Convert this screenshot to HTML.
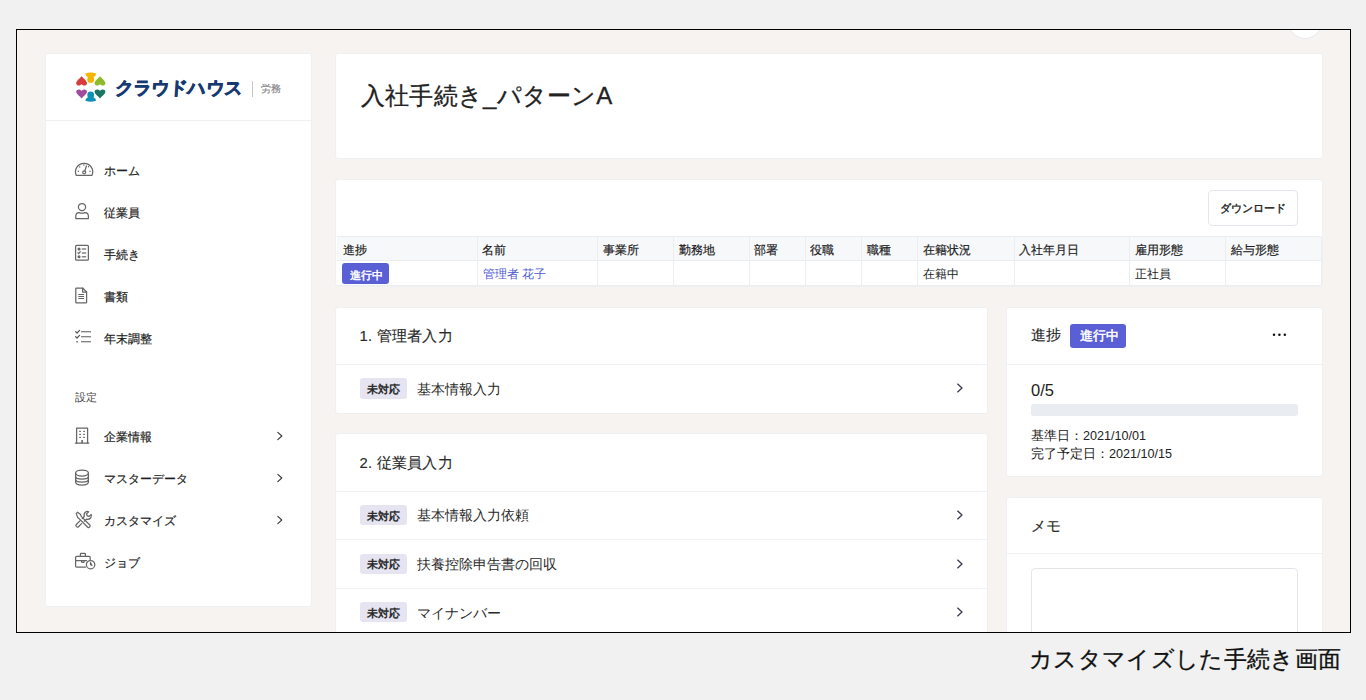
<!DOCTYPE html>
<html lang="ja">
<head>
<meta charset="utf-8">
<style>
*{box-sizing:border-box;margin:0;padding:0}
html,body{width:1366px;height:700px;overflow:hidden;background:#f1f1f1;font-family:"Liberation Sans",sans-serif;color:#222}
.frame{position:absolute;left:16px;top:29px;width:1335px;height:604px;border:1px solid #000;overflow:hidden;background:#f6f3f0}
.inner{position:absolute;left:-17px;top:-30px;width:1366px;height:700px}
.card{position:absolute;background:#fff;border:1px solid #eff0f2;border-radius:3px}
.abs{position:absolute;white-space:nowrap}
.caption{position:absolute;left:1029px;top:644px;font-size:23.3px;letter-spacing:0.33px;color:#111;-webkit-text-stroke:0.3px #111;white-space:nowrap;line-height:30px}
.nav{position:absolute;left:0;width:264px;height:42px}
.nav .t{position:absolute;left:58px;top:0;line-height:42px;font-size:13px;font-weight:bold;color:#222}
.nav svg{position:absolute;left:28px;top:12px}
.nav .chev{position:absolute;left:230px;top:15px}
.th{font-size:12px;line-height:16px;color:#1e1e1e;-webkit-text-stroke:0.2px #1e1e1e}
.sh{font-size:14.8px;line-height:22px;letter-spacing:0.25px;color:#2a2a2a;-webkit-text-stroke:0.15px #2a2a2a}
.mb{font-size:10.8px;line-height:16px;color:#222;-webkit-text-stroke:0.45px #222}
.rt{font-size:13.6px;line-height:20px;letter-spacing:0px;color:#2a2a2a}
.bdg2{font-size:12.6px;line-height:16px;letter-spacing:0.4px;color:#fff;-webkit-text-stroke:0.5px #fff}
.dt{font-size:12.6px;line-height:16px;color:#222}
.td{font-size:12px;line-height:16px;color:#222}
.bt{font-size:10.5px;line-height:16px;color:#222;-webkit-text-stroke:0.4px #222}
.bdg{font-size:11.2px;line-height:14px;letter-spacing:0.2px;color:#fff;-webkit-text-stroke:0.45px #fff}
.nt{font-size:12.4px;line-height:21px;color:#1e1e1e;-webkit-text-stroke:0.2px #1e1e1e}
</style>
</head>
<body>
<div class="frame"><div class="inner">
  <!-- avatar circle top right -->
  <div style="position:absolute;left:1288px;top:5px;width:34px;height:34px;border-radius:50%;background:#fff;border:1px solid #e8eaef"></div>

  <!-- sidebar -->
  <div class="card" style="left:45px;top:53px;width:267px;height:554px">
    <div style="position:absolute;left:0;top:66px;width:265px;height:1px;background:#eef0f2"></div>
  </div>
  <!-- logo -->
  <svg class="abs" style="left:70px;top:66px" width="40" height="40" viewBox="70 66 40 40">
    <path fill="#f4b400" d="M85.4 73.6 Q90.7 71.6 96 73.6 Q96.4 75.6 93.6 77.2 L87.8 77.2 Q85 75.6 85.4 73.6Z"/><circle fill="#f4b400" cx="90.7" cy="79.4" r="3.4"/>
    <path fill="#0f92b8" d="M85.4 100.8 Q90.7 102.8 96 100.8 Q96.4 98.8 93.6 97.2 L87.8 97.2 Q85 98.8 85.4 100.8Z"/><circle fill="#0f92b8" cx="90.7" cy="95" r="3.4"/>
    <path fill="#d83b3b" d="M76.20 83.20 C76.20 86.00 80.40 86.20 81.60 84.00 C82.80 86.20 87.00 86.00 87.00 83.20 C87.00 81.00 83.10 78.10 81.60 76.30 C80.10 78.10 76.20 81.00 76.20 83.20Z"/>
    <path fill="#8dbb2a" d="M94.60 83.20 C94.60 86.00 98.80 86.20 100.00 84.00 C101.20 86.20 105.40 86.00 105.40 83.20 C105.40 81.00 101.50 78.10 100.00 76.30 C98.50 78.10 94.60 81.00 94.60 83.20Z"/>
    <path fill="#a24ca0" d="M76.20 91.80 C76.20 89.00 80.40 88.80 81.60 91.00 C82.80 88.80 87.00 89.00 87.00 91.80 C87.00 94.00 83.10 96.60 81.60 98.40 C80.10 96.60 76.20 94.00 76.20 91.80Z"/>
    <path fill="#1b7566" d="M94.60 91.80 C94.60 89.00 98.80 88.80 100.00 91.00 C101.20 88.80 105.40 89.00 105.40 91.80 C105.40 94.00 101.50 96.60 100.00 98.40 C98.50 96.60 94.60 94.00 94.60 91.80Z"/>
  </svg>
  <div class="abs" style="left:115px;top:76px;font-size:18px;line-height:24px;font-weight:bold;color:#173a73;transform:skewX(-4deg);letter-spacing:0.2px;-webkit-text-stroke:0.75px #173a73">クラウドハウス</div>
  <div class="abs" style="left:252px;top:81px;width:1px;height:16px;background:#c8c8c8"></div>
  <div class="abs" style="left:261px;top:82px;font-size:10px;line-height:14px;color:#888;-webkit-text-stroke:0.2px #888">労務</div>


  <!-- nav -->
  <div class="abs nt" style="left:104px;top:161px">ホーム</div>
  <svg class="abs" style="left:70px;top:155px" width="30" height="30" viewBox="70 155 30 30"><g fill="none" stroke="#666" stroke-width="1.25" stroke-linecap="round" stroke-linejoin="round"><path d="M76.2 175.3 A8.6 8.6 0 1 1 92 175.3 Z"/><circle cx="84.2" cy="172.3" r="1.5"/><path d="M84.8 170.9 L86.4 166"/></g><g fill="#666"><circle cx="78.3" cy="171.2" r="0.7"/><circle cx="79.7" cy="167" r="0.7"/><circle cx="83.9" cy="165" r="0.7"/><circle cx="90" cy="171.2" r="0.7"/><circle cx="88.5" cy="166.7" r="0.7"/></g></svg>
  <div class="abs nt" style="left:104px;top:203px">従業員</div>
  <svg class="abs" style="left:70px;top:197px" width="30" height="30" viewBox="70 197 30 30"><g fill="none" stroke="#666" stroke-width="1.25" stroke-linecap="round" stroke-linejoin="round"><circle cx="82" cy="207.1" r="3.6"/><path d="M75.8 218.6 L88.4 218.6 L88.4 216.3 Q88.4 212.6 84.9 212.6 Q82 213.8 79.1 212.6 Q75.8 212.6 75.8 216.3 Z"/></g></svg>
  <div class="abs nt" style="left:104px;top:245px">手続き</div>
  <svg class="abs" style="left:70px;top:239px" width="30" height="30" viewBox="70 239 30 30"><g fill="none" stroke="#666" stroke-width="1.25" stroke-linecap="round" stroke-linejoin="round"><rect x="75.6" y="245.4" width="12.8" height="14.8" rx="1"/></g><g fill="#666"><circle cx="79" cy="249" r="1.55"/><circle cx="79" cy="256.8" r="1.55"/><rect x="81.8" y="248.4" width="4.4" height="1.2"/><rect x="81.8" y="252.4" width="4.4" height="1.2"/><rect x="81.8" y="256.2" width="4.4" height="1.2"/></g><path d="M77.6 252.4 L78.7 253.6 L80.6 251.4" fill="none" stroke="#666" stroke-width="1.1"/></svg>
  <div class="abs nt" style="left:104px;top:287px">書類</div>
  <svg class="abs" style="left:70px;top:281px" width="30" height="30" viewBox="70 281 30 30"><g fill="none" stroke="#666" stroke-width="1.25" stroke-linecap="round" stroke-linejoin="round"><path d="M76.5 288 L82.6 288 L86.6 292 L86.6 302.2 Q86.6 302.8 86 302.8 L76.5 302.8 Q75.8 302.8 75.8 302.2 L75.8 288.6 Q75.8 288 76.5 288 Z"/><path d="M82.6 288 L82.6 292 L86.6 292"/></g><g fill="#666"><rect x="78.3" y="294" width="5.8" height="1"/><rect x="78.3" y="296" width="5.8" height="1"/><rect x="78.3" y="298" width="5.8" height="1"/></g></svg>
  <div class="abs nt" style="left:104px;top:329px">年末調整</div>
  <svg class="abs" style="left:70px;top:323px" width="30" height="30" viewBox="70 323 30 30"><g fill="none" stroke="#555" stroke-width="1.2" stroke-linecap="round" stroke-linejoin="round"><path d="M75.6 331.6 L77 333 L79.6 330.4"/><path d="M75.6 336.6 L77 338 L79.6 335.4"/></g><g fill="#666"><rect x="81" y="331.2" width="10" height="1.1"/><rect x="81" y="336.2" width="10" height="1.1"/><rect x="81" y="341.2" width="10" height="1.1"/><rect x="76.3" y="341" width="1.5" height="1.5"/></g></svg>
  <div class="abs" style="left:75px;top:391px;font-size:10.8px;line-height:13px;color:#444">設定</div>
  <div class="abs nt" style="left:104px;top:427px">企業情報</div>
  <svg class="abs" style="left:70px;top:421px" width="30" height="30" viewBox="70 421 30 30"><g fill="none" stroke="#666" stroke-width="1.25" stroke-linecap="round" stroke-linejoin="round"><path d="M76.6 443 L76.6 428 L87.6 428 L87.6 443"/><path d="M75.4 443 L88.8 443"/></g><g fill="#555"><rect x="79.3" y="430.8" width="1.5" height="1.2"/><rect x="83.3" y="430.8" width="1.5" height="1.2"/><rect x="79.3" y="433.8" width="1.5" height="1.2"/><rect x="83.3" y="433.8" width="1.5" height="1.2"/><rect x="79.3" y="436.8" width="1.5" height="1.2"/><rect x="83.3" y="436.8" width="1.5" height="1.2"/><rect x="81.4" y="440" width="1.4" height="3"/></g></svg>
  <svg class="abs" style="left:272px;top:427px" width="16" height="16" viewBox="272 427 16 16"><path d="M277.8 432.4 L281.8 436 L277.8 439.6" fill="none" stroke="#3a3a3a" stroke-width="1.15" stroke-linecap="round" stroke-linejoin="round"/></svg>
  <div class="abs nt" style="left:104px;top:469px">マスターデータ</div>
  <svg class="abs" style="left:70px;top:463px" width="30" height="30" viewBox="70 463 30 30"><g fill="none" stroke="#666" stroke-width="1.25" stroke-linecap="round" stroke-linejoin="round"><ellipse cx="82" cy="473" rx="6.4" ry="3"/><path d="M75.6 473 L75.6 482 Q75.6 485 82 485 Q88.4 485 88.4 482 L88.4 473"/><path d="M75.6 476.6 Q75.6 479.2 82 479.2 Q88.4 479.2 88.4 476.6"/><path d="M75.6 479.6 Q75.6 482.2 82 482.2 Q88.4 482.2 88.4 479.6"/></g></svg>
  <svg class="abs" style="left:272px;top:469px" width="16" height="16" viewBox="272 469 16 16"><path d="M277.8 474.4 L281.8 478 L277.8 481.6" fill="none" stroke="#3a3a3a" stroke-width="1.15" stroke-linecap="round" stroke-linejoin="round"/></svg>
  <div class="abs nt" style="left:104px;top:511px">カスタマイズ</div>
  <svg class="abs" style="left:70px;top:505px" width="30" height="30" viewBox="70 505 30 30"><g fill="none" stroke="#666" stroke-width="1.25" stroke-linecap="round" stroke-linejoin="round"><path d="M76.2 513.6 L77.6 512.2 L80.6 514.5 L81.2 516.4 L89.8 525 Q90.6 526 89.6 527 Q88.6 528 87.7 527.2 L79.1 518.6 L77.6 517.4 Z"/><path d="M80.2 520.6 L76.3 524.5 Q75.5 525.6 76.4 526.6 Q77.4 527.6 78.4 526.8 L81.6 523.6"/><path d="M82.2 518.6 L84.3 516.5 Q83.4 513.6 85.6 512 Q87.2 511 88.6 511.8 L86.5 514 L87.2 515.8 L89.1 516.4 L91.2 514.4 Q91.8 516.4 90.6 518 Q89 519.8 86.4 519.2 L84.3 521.2"/></g></svg>
  <svg class="abs" style="left:272px;top:511px" width="16" height="16" viewBox="272 511 16 16"><path d="M277.8 516.4 L281.8 520 L277.8 523.6" fill="none" stroke="#3a3a3a" stroke-width="1.15" stroke-linecap="round" stroke-linejoin="round"/></svg>
  <div class="abs nt" style="left:104px;top:553px">ジョブ</div>
  <svg class="abs" style="left:70px;top:547px" width="30" height="30" viewBox="70 547 30 30"><g fill="none" stroke="#666" stroke-width="1.25" stroke-linecap="round" stroke-linejoin="round"><path d="M85.5 567 L76.6 567 Q75.6 567 75.6 566 L75.6 557.4 Q75.6 556.4 76.6 556.4 L89.2 556.4 Q90.2 556.4 90.2 557.4 L90.2 559.4"/><path d="M80.4 556.2 L80.4 554.2 Q80.4 553.4 81.2 553.4 L84.6 553.4 Q85.4 553.4 85.4 554.2 L85.4 556.2"/><path d="M75.6 560.7 L86.6 560.7"/><path d="M81.6 560.7 L81.6 561.8 Q81.6 562.4 82.2 562.4 L83.4 562.4 Q84 562.4 84 561.8 L84 560.7"/><circle cx="90.6" cy="564.7" r="4.2"/></g><path d="M90.4 562.2 L90.4 564.9 L92.2 565.6 Z" fill="#555" stroke="#555" stroke-width="0.8" stroke-linejoin="round"/></svg>
  <!-- title card -->
  <div class="card" style="left:335px;top:53px;width:988px;height:106px">
    <div class="abs" style="left:25px;top:24.5px;font-size:24px;line-height:34px;letter-spacing:0.2px;color:#222;-webkit-text-stroke:0.3px #222">入社手続き_パターンA</div>
  </div>

  <!-- table card -->
  <div class="card" style="left:335px;top:179px;width:988px;height:108px"></div>
  <div class="abs" style="left:1208px;top:190px;width:90px;height:36px;border:1px solid #e4e6eb;border-radius:4px;background:#fff"></div>
  <div class="abs bt" style="left:1220px;top:199.5px">ダウンロード</div>
  <div class="abs" style="left:337px;top:236px;width:984px;height:25px;background:#f7f8fa;border-top:1px solid #ebedf1;border-bottom:1px solid #eaecf0"></div>
  <div class="abs" style="left:337px;top:285px;width:984px;height:1px;background:#eceef1"></div>
  <div class="abs" style="left:476.7px;top:237px;width:1px;height:48px;background:#ebedf1"></div>
  <div class="abs" style="left:597.0px;top:237px;width:1px;height:48px;background:#ebedf1"></div>
  <div class="abs" style="left:672.9px;top:237px;width:1px;height:48px;background:#ebedf1"></div>
  <div class="abs" style="left:748.5px;top:237px;width:1px;height:48px;background:#ebedf1"></div>
  <div class="abs" style="left:804.8px;top:237px;width:1px;height:48px;background:#ebedf1"></div>
  <div class="abs" style="left:861.3px;top:237px;width:1px;height:48px;background:#ebedf1"></div>
  <div class="abs" style="left:917.3px;top:237px;width:1px;height:48px;background:#ebedf1"></div>
  <div class="abs" style="left:1013.7px;top:237px;width:1px;height:48px;background:#ebedf1"></div>
  <div class="abs" style="left:1129.2px;top:237px;width:1px;height:48px;background:#ebedf1"></div>
  <div class="abs" style="left:1224.9px;top:237px;width:1px;height:48px;background:#ebedf1"></div>
  <div class="abs" style="left:1320.5px;top:237px;width:1px;height:48px;background:#ebedf1"></div>
  <div class="abs th" style="left:342.6px;top:241.8px">進捗</div>
  <div class="abs th" style="left:482.3px;top:241.8px">名前</div>
  <div class="abs th" style="left:602.6px;top:241.8px">事業所</div>
  <div class="abs th" style="left:678.5px;top:241.8px">勤務地</div>
  <div class="abs th" style="left:754.1px;top:241.8px">部署</div>
  <div class="abs th" style="left:810.4px;top:241.8px">役職</div>
  <div class="abs th" style="left:866.9px;top:241.8px">職種</div>
  <div class="abs th" style="left:922.9px;top:241.8px">在籍状況</div>
  <div class="abs th" style="left:1019.3px;top:241.8px">入社年月日</div>
  <div class="abs th" style="left:1134.8px;top:241.8px">雇用形態</div>
  <div class="abs th" style="left:1230.5px;top:241.8px">給与形態</div>
  <div class="abs" style="left:342px;top:263px;width:47px;height:21px;border-radius:3px;background:#5b5fd6"></div>
  <div class="abs bdg" style="left:349.5px;top:267.5px">進行中</div>
  <div class="abs td" style="left:482.5px;top:266px;color:#4f5bd5">管理者 花子</div>
  <div class="abs td" style="left:922.8px;top:266px">在籍中</div>
  <div class="abs td" style="left:1134.5px;top:266px">正社員</div>


  <!-- section 1 -->
  <div class="card" style="left:335px;top:307px;width:653px;height:107px">
    <div style="position:absolute;left:0;top:56px;width:651px;height:1px;background:#eef0f2"></div>
  </div>
  <div class="abs sh" style="left:359.5px;top:325px">1. 管理者入力</div>
  <div class="abs" style="left:360px;top:378.2px;width:47px;height:20.4px;border-radius:3px;background:#e5e4f0"></div>
  <div class="abs mb" style="left:367px;top:380.9px">未対応</div>
  <div class="abs rt" style="left:416.5px;top:379.8px">基本情報入力</div>
  <svg class="abs" style="left:952px;top:380.4px" width="16" height="16" viewBox="952 380.4 16 16"><path d="M957.7 384.5 L962 388.4 L957.7 392.3" fill="none" stroke="#3a3f50" stroke-width="1.35" stroke-linecap="round" stroke-linejoin="round"/></svg>
  <!-- section 2 -->
  <div class="card" style="left:335px;top:433px;width:653px;height:270px">
    <div style="position:absolute;left:0;top:57px;width:651px;height:1px;background:#eef0f2"></div>
    <div style="position:absolute;left:0;top:105px;width:651px;height:1px;background:#f2f3f5"></div>
    <div style="position:absolute;left:0;top:153.5px;width:651px;height:1px;background:#f2f3f5"></div>
  </div>
  <div class="abs sh" style="left:359.5px;top:452px">2. 従業員入力</div>
  <div class="abs" style="left:360px;top:505.0px;width:47px;height:20.4px;border-radius:3px;background:#e5e4f0"></div>
  <div class="abs mb" style="left:367px;top:507.7px">未対応</div>
  <div class="abs rt" style="left:416.5px;top:506.0px">基本情報入力依頼</div>
  <svg class="abs" style="left:952px;top:507.2px" width="16" height="16" viewBox="952 507.2 16 16"><path d="M957.7 511.3 L962 515.2 L957.7 519.1" fill="none" stroke="#3a3f50" stroke-width="1.35" stroke-linecap="round" stroke-linejoin="round"/></svg>
  <div class="abs" style="left:360px;top:553.6px;width:47px;height:20.4px;border-radius:3px;background:#e5e4f0"></div>
  <div class="abs mb" style="left:367px;top:556.3px">未対応</div>
  <div class="abs rt" style="left:416.5px;top:555.0px">扶養控除申告書の回収</div>
  <svg class="abs" style="left:952px;top:555.8px" width="16" height="16" viewBox="952 555.8 16 16"><path d="M957.7 559.9 L962 563.8 L957.7 567.7" fill="none" stroke="#3a3f50" stroke-width="1.35" stroke-linecap="round" stroke-linejoin="round"/></svg>
  <div class="abs" style="left:360px;top:602.0px;width:47px;height:20.4px;border-radius:3px;background:#e5e4f0"></div>
  <div class="abs mb" style="left:367px;top:604.7px">未対応</div>
  <div class="abs rt" style="left:416.5px;top:603.5px">マイナンバー</div>
  <svg class="abs" style="left:952px;top:604.2px" width="16" height="16" viewBox="952 604.2 16 16"><path d="M957.7 608.3 L962 612.2 L957.7 616.1" fill="none" stroke="#3a3f50" stroke-width="1.35" stroke-linecap="round" stroke-linejoin="round"/></svg>
  <!-- progress -->
  <div class="card" style="left:1006px;top:307px;width:317px;height:170px">
    <div style="position:absolute;left:0;top:56px;width:315px;height:1px;background:#eef0f2"></div>
  </div>
  <div class="abs sh" style="left:1030.5px;top:324px">進捗</div>
  <div class="abs" style="left:1070px;top:324px;width:56px;height:24px;border-radius:3px;background:#5b5fd6"></div>
  <div class="abs bdg2" style="left:1079.5px;top:328px">進行中</div>
  <svg class="abs" style="left:1270px;top:330px" width="20" height="10" viewBox="1270 330 20 10"><g fill="#111"><circle cx="1274" cy="334.8" r="1.25"/><circle cx="1279.4" cy="334.8" r="1.25"/><circle cx="1284.8" cy="334.8" r="1.25"/></g></svg>
  <div class="abs" style="left:1031px;top:379.5px;font-size:16.5px;line-height:20px;color:#222">0/5</div>
  <div class="abs" style="left:1031px;top:404px;width:267px;height:11.5px;border-radius:3px;background:#e9ecf0"></div>
  <div class="abs dt" style="left:1031px;top:428px">基準日：2021/10/01</div>
  <div class="abs dt" style="left:1031px;top:446px">完了予定日：2021/10/15</div>
  <!-- memo -->
  <div class="card" style="left:1006px;top:497px;width:317px;height:200px">
    <div style="position:absolute;left:0;top:55px;width:315px;height:1px;background:#eef0f2"></div>
  </div>
  <div class="abs sh" style="left:1031px;top:515px">メモ</div>
  <div class="abs" style="left:1031px;top:568px;width:267px;height:100px;border:1px solid #e3e5ea;border-radius:4px;background:#fff"></div>
</div></div>
<div class="caption">カスタマイズした手続き画面</div>
</body>
</html>
